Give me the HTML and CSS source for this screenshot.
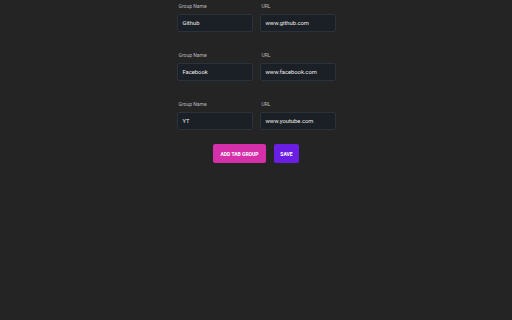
FILE: index.html
```html
<!DOCTYPE html>
<html>
<head>
<meta charset="utf-8">
<link rel="stylesheet" href="styles.css">
</head>
<body>
<div class="page">
  <div class="groups">
    <div class="row">
      <div class="field"><label class="label">Group Name</label><div class="input">Github</div></div>
      <div class="field"><label class="label">URL</label><div class="input">www.github.com</div></div>
    </div>
    <div class="row">
      <div class="field"><label class="label">Group Name</label><div class="input">Facebook</div></div>
      <div class="field"><label class="label">URL</label><div class="input">www.facebook.com</div></div>
    </div>
    <div class="row">
      <div class="field"><label class="label">Group Name</label><div class="input">YT</div></div>
      <div class="field"><label class="label">URL</label><div class="input">www.youtube.com</div></div>
    </div>
  </div>
  <div class="actions">
    <button class="btn btn-add">Add Tab Group</button>
    <button class="btn btn-save">Save</button>
  </div>
</div>
</body>
</html>
```
FILE: styles.css
```css
html, body {
  margin: 0;
  padding: 0;
  background: #242424;
  width: 512px;
  height: 320px;
  overflow: hidden;
  font-family: Roboto, "Liberation Sans", sans-serif;
}
.page {
  display: flex;
  flex-direction: column;
  align-items: center;
  padding-top: 3px;
}
.groups {
  display: flex;
  flex-direction: column;
  gap: 20px;
}
.row {
  display: flex;
  gap: 7px;
}
.field {
  display: flex;
  flex-direction: column;
}
.label {
  font-size: 5px;
  line-height: 6px;
  color: #b8b8b8;
  padding-left: 2px;
  margin-bottom: 5px;
}
.input {
  box-sizing: border-box;
  width: 76px;
  height: 18px;
  background: #1b1f26;
  border: 1px solid #2c323b;
  border-radius: 2px;
  padding-left: 5px;
  font-size: 5.8px;
  line-height: 16px;
  color: #ececec;
}
.actions {
  display: flex;
  gap: 8px;
  margin-top: 14px;
}
.btn {
  box-sizing: border-box;
  height: 19px;
  border: none;
  border-radius: 2px;
  color: #fff;
  font-family: Roboto, "Liberation Sans", sans-serif;
  font-weight: 700;
  font-size: 5px;
  text-transform: uppercase;
  padding: 0;
}
.btn-add {
  width: 53px;
  background: #d530a9;
}
.btn-save {
  width: 25px;
  background: #6b1ee3;
}
```
